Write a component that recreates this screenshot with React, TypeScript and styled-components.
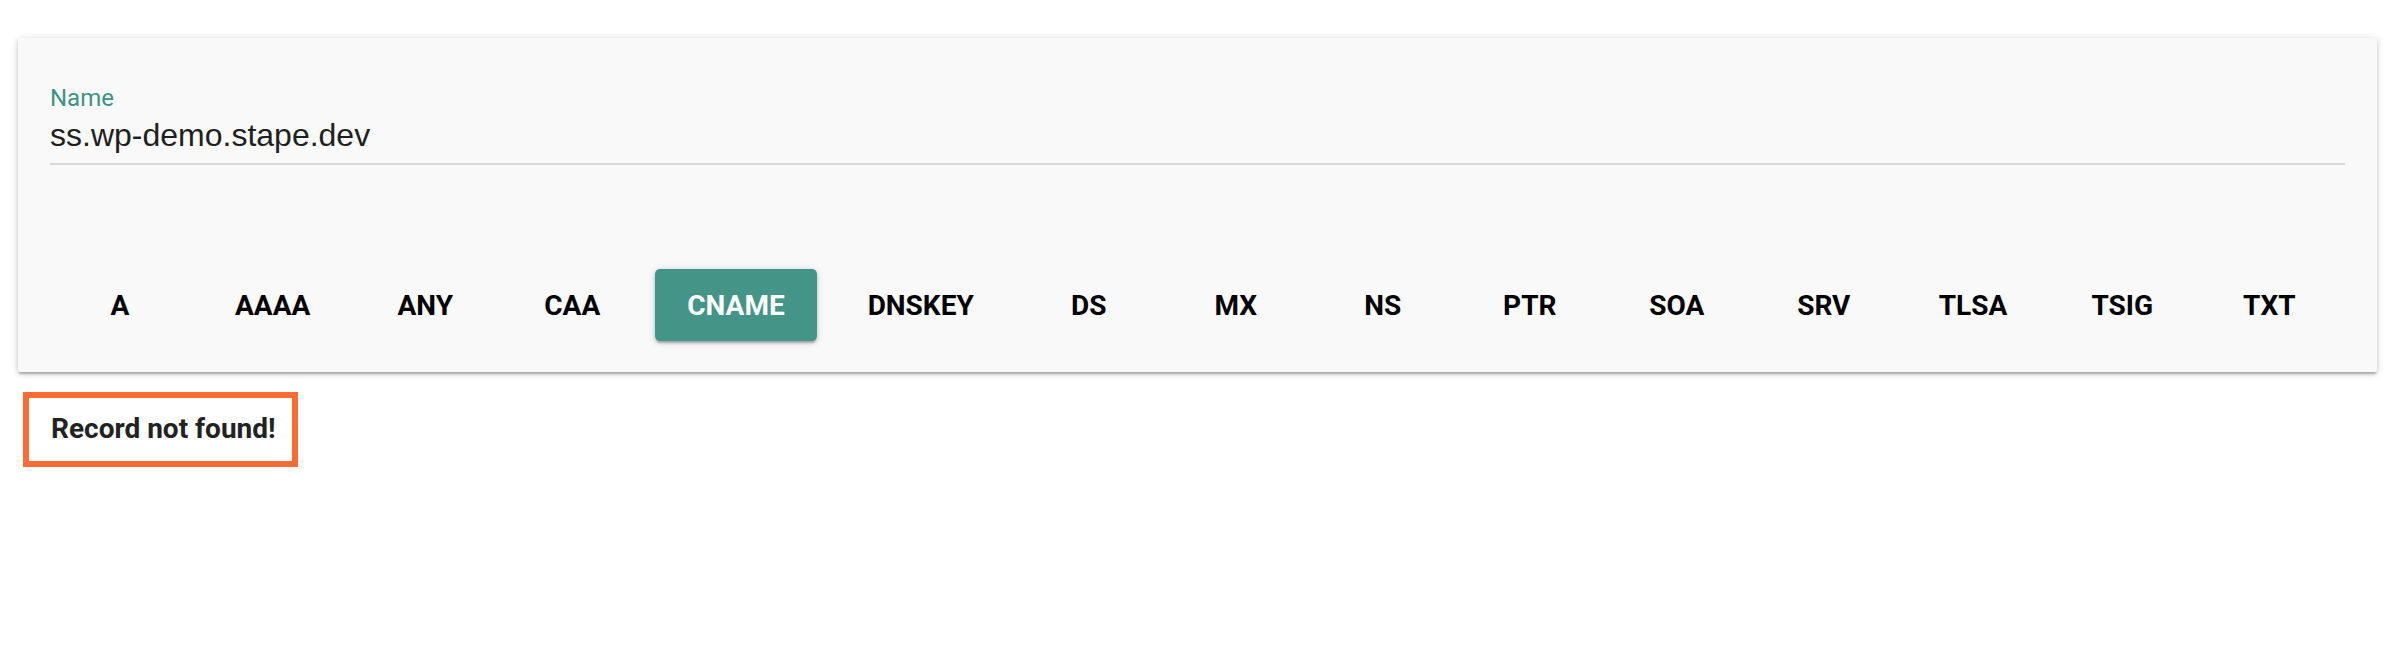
import React from 'react';
import styled, { createGlobalStyle } from 'styled-components';

const GlobalStyle = createGlobalStyle`
    html, body {
        margin: 0;
        padding: 0;
        background: #ffffff;
        font-family: Roboto, "Liberation Sans", Arial, sans-serif;
    }
`;

const Page = styled.div`
    padding: 38px 17px 0 18px;
`;

const Card = styled.div`
    background: #f9f9f9;
    border-radius: 2px;
    padding: 48px 32px 31px 32px;
    box-shadow: 0 3px 2px -1px rgba(0, 0, 0, 0.2), 0 2px 4px 0 rgba(0, 0, 0, 0.14), 0 1px 10px 0 rgba(0, 0, 0, 0.12);
`;

const Field = styled.div`
    display: flex;
    flex-direction: column;
    border-bottom: 2px solid #d9d9d9;
    padding-bottom: 8px;
`;

const Label = styled.label`
    font-size: 24px;
    line-height: 24px;
    color: #3d9384;
`;

const Value = styled.div`
    margin-top: 5px;
    font-family: "Liberation Sans", Arial, sans-serif;
    font-size: 32px;
    line-height: 40px;
    color: #1f1f1f;
`;

const TypeRow = styled.div`
    display: flex;
    align-items: center;
    gap: 19px;
    margin-top: 104px;
    padding-left: 6px;
`;

const TypeButton = styled.button<{ active?: boolean }>`
    min-width: 128px;
    height: 72px;
    padding: 0 32px;
    border: none;
    border-radius: 5px;
    font-family: Roboto, "Liberation Sans", Arial, sans-serif;
    font-size: 28px;
    font-weight: 700;
    color: ${p => (p.active ? '#ffffff' : '#000000')};
    background: ${p => (p.active ? '#449488' : 'transparent')};
    box-shadow: ${p => (p.active ? '0 3px 2px -1px rgba(0,0,0,0.2), 0 2px 4px 0 rgba(0,0,0,0.14), 0 1px 8px 0 rgba(0,0,0,0.12)' : 'none')};
    cursor: pointer;
`;

const Message = styled.div`
    display: inline-block;
    margin: 20px 0 0 5px;
    padding: 14px 16px 16px 22px;
    border: 6px solid #ff6b35;
    font-size: 28px;
    font-weight: 700;
    color: #222222;
`;

const TYPES = ['A', 'AAAA', 'ANY', 'CAA', 'CNAME', 'DNSKEY', 'DS', 'MX', 'NS', 'PTR', 'SOA', 'SRV', 'TLSA', 'TSIG', 'TXT'];

const App: React.FC = () => {
    const [selected, setSelected] = React.useState('CNAME');

    return (
        <>
            <GlobalStyle />
            <Page>
                <Card>
                    <Field>
                        <Label>Name</Label>
                        <Value>ss.wp-demo.stape.dev</Value>
                    </Field>
                    <TypeRow>
                        {TYPES.map(t => (
                            <TypeButton key={t} active={t === selected} onClick={() => setSelected(t)}>
                                {t}
                            </TypeButton>
                        ))}
                    </TypeRow>
                </Card>
                <Message>Record not found!</Message>
            </Page>
        </>
    );
};

export default App;
